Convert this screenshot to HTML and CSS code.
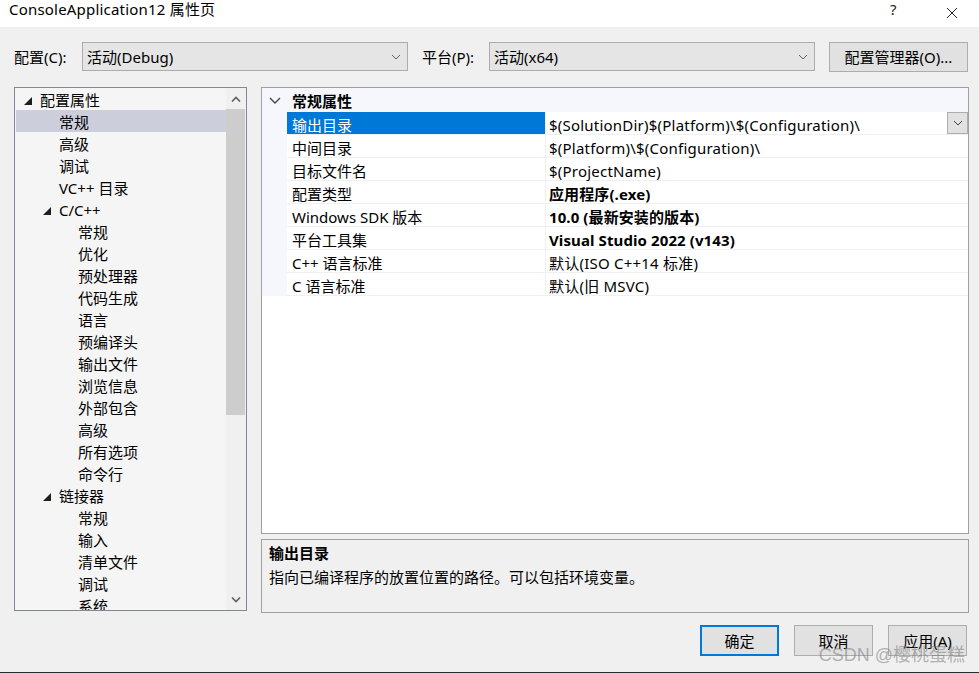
FILE: index.html
```html
<!DOCTYPE html>
<html lang="zh-CN">
<head>
    <meta charset="UTF-8">
    <title>ConsoleApplication12 属性页</title>
    <link rel="stylesheet" href="styles.css">
</head>
<body>
    <div class="window">
        <div class="titlebar">
            <span class="title">ConsoleApplication12 属性页</span>
            <span class="help">?</span>
            <span class="close">
                <svg width="12" height="12" viewBox="0 0 12 12"><path d="M1 1L11 11M11 1L1 11" stroke="#222" stroke-width="1"/></svg>
            </span>
        </div>

        <div class="toolbar">
            <label class="tb-label">配置(C):</label>
            <div class="combo">
                <span>活动(Debug)</span>
                <svg class="combo-arrow" width="10" height="6" viewBox="0 0 10 6"><path d="M1 1L5 5L9 1" fill="none" stroke="#606060" stroke-width="1"/></svg>
            </div>
            <label class="tb-label platform">平台(P):</label>
            <div class="combo">
                <span>活动(x64)</span>
                <svg class="combo-arrow" width="10" height="6" viewBox="0 0 10 6"><path d="M1 1L5 5L9 1" fill="none" stroke="#606060" stroke-width="1"/></svg>
            </div>
            <button class="btn manager">配置管理器(O)...</button>
        </div>

        <div class="main">
            <div class="tree">
                <div class="tree-list">
                    <div class="node lv0"><span class="caret"></span>配置属性</div>
                    <div class="node lv1 selected">常规</div>
                    <div class="node lv1">高级</div>
                    <div class="node lv1">调试</div>
                    <div class="node lv1">VC++ 目录</div>
                    <div class="node lv1"><span class="caret"></span>C/C++</div>
                    <div class="node lv2">常规</div>
                    <div class="node lv2">优化</div>
                    <div class="node lv2">预处理器</div>
                    <div class="node lv2">代码生成</div>
                    <div class="node lv2">语言</div>
                    <div class="node lv2">预编译头</div>
                    <div class="node lv2">输出文件</div>
                    <div class="node lv2">浏览信息</div>
                    <div class="node lv2">外部包含</div>
                    <div class="node lv2">高级</div>
                    <div class="node lv2">所有选项</div>
                    <div class="node lv2">命令行</div>
                    <div class="node lv1"><span class="caret"></span>链接器</div>
                    <div class="node lv2">常规</div>
                    <div class="node lv2">输入</div>
                    <div class="node lv2">清单文件</div>
                    <div class="node lv2">调试</div>
                    <div class="node lv2">系统</div>
                </div>
                <div class="scrollbar">
                    <div class="sb-btn">
                        <svg width="10" height="6" viewBox="0 0 10 6"><path d="M1 5.5L5 1.5L9 5.5" fill="none" stroke="#606060" stroke-width="1.6"/></svg>
                    </div>
                    <div class="sb-thumb"></div>
                    <div class="sb-track"></div>
                    <div class="sb-btn">
                        <svg width="10" height="6" viewBox="0 0 10 6"><path d="M1 0.5L5 4.5L9 0.5" fill="none" stroke="#606060" stroke-width="1.6"/></svg>
                    </div>
                </div>
            </div>

            <div class="right">
                <div class="grid">
                    <div class="category">
                        <span class="cat-toggle">
                            <svg width="12" height="7" viewBox="0 0 12 7"><path d="M1 1L6 6L11 1" fill="none" stroke="#444" stroke-width="1.4"/></svg>
                        </span>
                        <span class="cat-name">常规属性</span>
                    </div>
                    <div class="prop selected">
                        <div class="gutter"></div>
                        <div class="pname">输出目录</div>
                        <div class="pvalue">$(SolutionDir)$(Platform)\$(Configuration)\
                            <span class="drop">
                                <svg width="10" height="6" viewBox="0 0 10 6"><path d="M1 1L5 5L9 1" fill="none" stroke="#444" stroke-width="1"/></svg>
                            </span>
                        </div>
                    </div>
                    <div class="prop">
                        <div class="gutter"></div>
                        <div class="pname">中间目录</div>
                        <div class="pvalue">$(Platform)\$(Configuration)\</div>
                    </div>
                    <div class="prop">
                        <div class="gutter"></div>
                        <div class="pname">目标文件名</div>
                        <div class="pvalue">$(ProjectName)</div>
                    </div>
                    <div class="prop">
                        <div class="gutter"></div>
                        <div class="pname">配置类型</div>
                        <div class="pvalue bold">应用程序(.exe)</div>
                    </div>
                    <div class="prop">
                        <div class="gutter"></div>
                        <div class="pname">Windows SDK 版本</div>
                        <div class="pvalue bold">10.0 (最新安装的版本)</div>
                    </div>
                    <div class="prop">
                        <div class="gutter"></div>
                        <div class="pname">平台工具集</div>
                        <div class="pvalue bold">Visual Studio 2022 (v143)</div>
                    </div>
                    <div class="prop">
                        <div class="gutter"></div>
                        <div class="pname">C++ 语言标准</div>
                        <div class="pvalue">默认(ISO C++14 标准)</div>
                    </div>
                    <div class="prop">
                        <div class="gutter"></div>
                        <div class="pname">C 语言标准</div>
                        <div class="pvalue">默认(旧 MSVC)</div>
                    </div>
                </div>

                <div class="description">
                    <div class="desc-title">输出目录</div>
                    <div class="desc-text">指向已编译程序的放置位置的路径。可以包括环境变量。</div>
                </div>
            </div>
        </div>

        <div class="footer">
            <button class="btn default">确定</button>
            <button class="btn">取消</button>
            <button class="btn">应用(A)</button>
            <span class="watermark">CSDN @樱桃蛋糕</span>
        </div>
    </div>
</body>
</html>
```

FILE: styles.css
```css
* {
    margin: 0;
    padding: 0;
    box-sizing: border-box;
}

body {
    width: 979px;
    height: 673px;
    overflow: hidden;
    background: #f0f0f0;
    font-family: "Noto Sans", "Noto Sans CJK SC", sans-serif;
    font-size: 15px;
    color: #000;
}

.window {
    position: relative;
    height: 673px;
    display: flex;
    flex-direction: column;
    border-bottom: 1px solid #2b2b2b;
}

/* title bar */
.titlebar {
    height: 27px;
    background: #fff;
    display: flex;
    align-items: flex-start;
    padding-left: 9px;
}

.title {
    flex: 1;
    line-height: 18px;
    letter-spacing: 0.2px;
}

.help {
    width: 58px;
    line-height: 18px;
    font-size: 15px;
    color: #222;
    padding-left: 2px;
}

.close {
    width: 33px;
    padding-top: 3px;
}

/* config row */
.toolbar {
    display: flex;
    align-items: center;
    height: 29px;
    margin-top: 15px;
    padding-left: 14px;
}

.tb-label {
    width: 68px;
}

.tb-label.platform {
    width: 67px;
    margin-left: 14px;
}

.combo {
    width: 326px;
    height: 29px;
    background: #e5e5e5;
    border: 1px solid #acacac;
    display: flex;
    align-items: center;
    justify-content: space-between;
    padding: 0 6px 0 4px;
}

.btn {
    font-family: inherit;
    font-size: 15px;
    color: #000;
    background: #e1e1e1;
    border: 1px solid #adadad;
    width: 79px;
    height: 31px;
}

.btn.manager {
    width: 139px;
    height: 30px;
    margin-left: 14px;
}

/* main area */
.main {
    display: flex;
    margin-top: 16px;
    padding-left: 14px;
    gap: 14px;
}

.tree {
    width: 233px;
    height: 524px;
    border: 1px solid #828790;
    background: #f5f5f5;
    display: flex;
    overflow: hidden;
}

.tree-list {
    flex: 1;
    padding-left: 1px;
    overflow: hidden;
}

.node {
    height: 22px;
    line-height: 24px;
    white-space: nowrap;
}

.node.lv0 { padding-left: 24px; }
.node.lv1 { padding-left: 43px; }
.node.lv2 { padding-left: 62px; }

.node.selected {
    background: #cccedb;
}

.caret {
    display: inline-block;
    width: 0;
    height: 0;
    margin-left: -16px;
    margin-right: 8px;
    border-left: 8px solid transparent;
    border-bottom: 8px solid #1e1e1e;
    vertical-align: 1px;
}

.scrollbar {
    width: 20px;
    display: flex;
    flex-direction: column;
    background: #f0f0f0;
}

.sb-btn {
    height: 21px;
    display: flex;
    align-items: center;
    justify-content: center;
}

.sb-thumb {
    height: 306px;
    background: #cdcdcd;
    margin: 0 1px 0 0;
}

.sb-track {
    flex: 1;
}

.right {
    width: 708px;
    display: flex;
    flex-direction: column;
    gap: 5px;
}

.grid {
    height: 447px;
    background: #fff;
    border: 1px solid #a0a0a0;
}

.category {
    height: 24px;
    background: #f5f7fc;
    display: flex;
    align-items: center;
}

.cat-toggle {
    width: 30px;
    padding-left: 7px;
    display: flex;
}

.cat-name {
    font-weight: bold;
}

.prop {
    display: grid;
    grid-template-columns: 25px 259px 1fr;
    height: 23px;
}

.gutter {
    background: #f5f7fc;
}

.pname,
.pvalue {
    height: 23px;
    padding-top: 3px;
    line-height: 21px;
    border-bottom: 1px solid #f0f0f0;
    white-space: nowrap;
    padding-left: 5px;
}

.pname {
    border-right: 1px solid #f0f0f0;
}

.pvalue {
    padding-left: 3px;
    position: relative;
    letter-spacing: 0.22px;
}

.pvalue.bold {
    letter-spacing: 0.1px;
}

.prop.selected .pname {
    background: #0078d7;
    color: #fff;
}

.bold {
    font-weight: bold;
}

.drop {
    position: absolute;
    right: 0;
    top: 0;
    width: 21px;
    height: 22px;
    background: #e1e1e1;
    border: 1px solid #adadad;
    display: flex;
    align-items: center;
    justify-content: center;
}

.description {
    height: 74px;
    border: 1px solid #a0a0a0;
    padding: 2px 7px;
}

.desc-title {
    font-weight: bold;
    line-height: 22px;
}

.desc-text {
    line-height: 26px;
}

/* dialog buttons */
.footer {
    display: flex;
    justify-content: flex-end;
    gap: 15px;
    margin-top: 12px;
    padding-right: 12px;
}

.btn.default {
    border: 2px solid #0078d7;
}

.watermark {
    position: absolute;
    right: 14px;
    bottom: 6px;
    font-size: 18px;
    color: rgba(120, 120, 120, 0.55);
    font-family: "Liberation Sans", "Noto Sans CJK SC", sans-serif;
}
```
